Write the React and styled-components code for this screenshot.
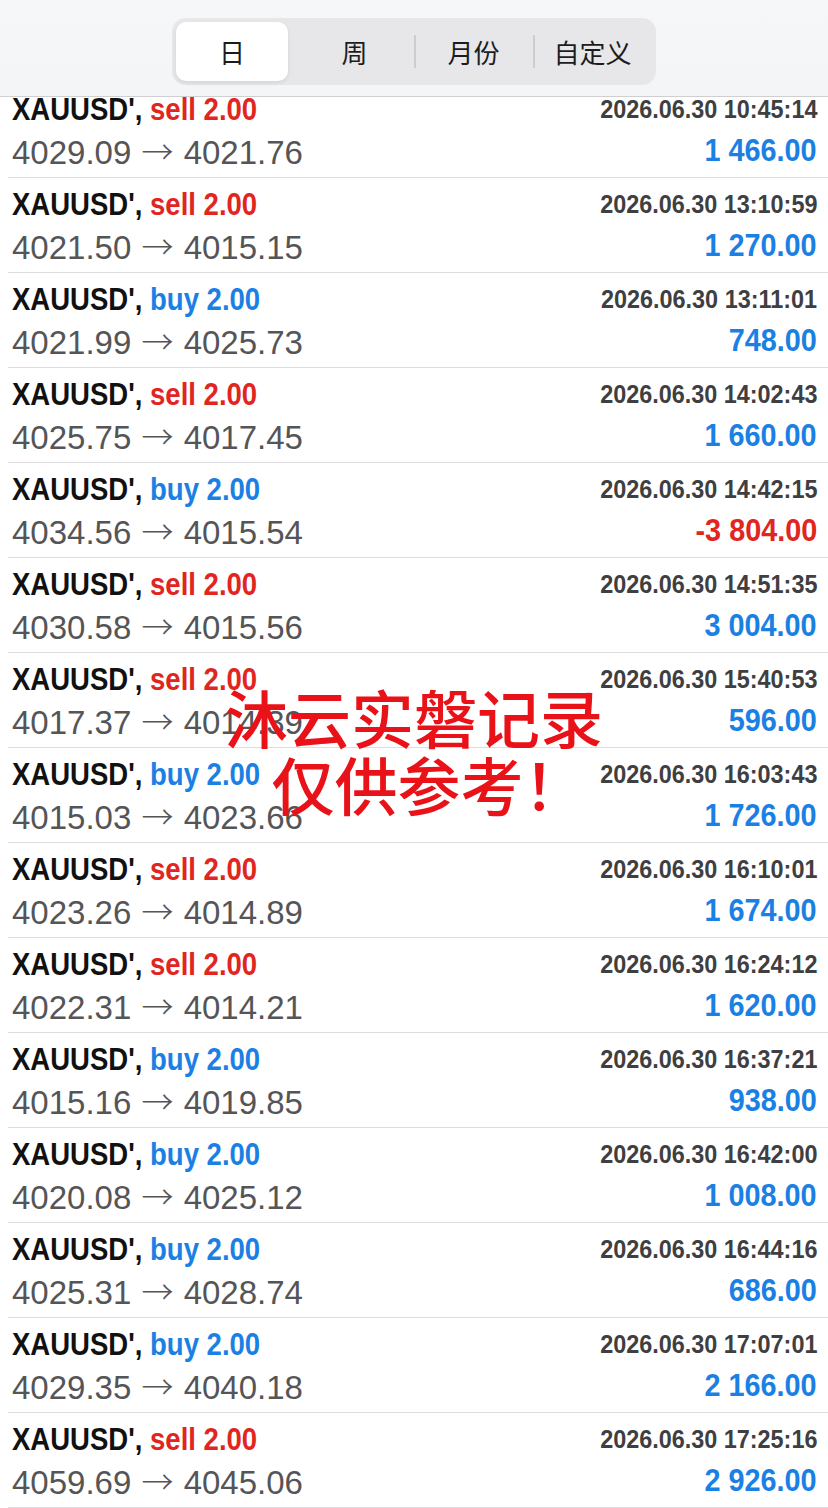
import React from 'react'
import styled, { createGlobalStyle, css } from 'styled-components'

const trades = [
  { side: 'sell', open: '4029.09', close: '4021.76', time: '10:45:14', profit: '1 466.00' },
  { side: 'sell', open: '4021.50', close: '4015.15', time: '13:10:59', profit: '1 270.00' },
  { side: 'buy', open: '4021.99', close: '4025.73', time: '13:11:01', profit: '748.00' },
  { side: 'sell', open: '4025.75', close: '4017.45', time: '14:02:43', profit: '1 660.00' },
  { side: 'buy', open: '4034.56', close: '4015.54', time: '14:42:15', profit: '-3 804.00' },
  { side: 'sell', open: '4030.58', close: '4015.56', time: '14:51:35', profit: '3 004.00' },
  { side: 'sell', open: '4017.37', close: '4014.39', time: '15:40:53', profit: '596.00' },
  { side: 'buy', open: '4015.03', close: '4023.66', time: '16:03:43', profit: '1 726.00' },
  { side: 'sell', open: '4023.26', close: '4014.89', time: '16:10:01', profit: '1 674.00' },
  { side: 'sell', open: '4022.31', close: '4014.21', time: '16:24:12', profit: '1 620.00' },
  { side: 'buy', open: '4015.16', close: '4019.85', time: '16:37:21', profit: '938.00' },
  { side: 'buy', open: '4020.08', close: '4025.12', time: '16:42:00', profit: '1 008.00' },
  { side: 'buy', open: '4025.31', close: '4028.74', time: '16:44:16', profit: '686.00' },
  { side: 'buy', open: '4029.35', close: '4040.18', time: '17:07:01', profit: '2 166.00' },
  { side: 'sell', open: '4059.69', close: '4045.06', time: '17:25:16', profit: '2 926.00' },
]

const tabs = ['日', '周', '月份', '自定义']

const RED = '#e1251f'
const BLUE = '#1a80e4'

// no condensed face installed, so squeeze Liberation Sans bold
const condensed = (scale, origin) => css`
  display: inline-block;
  font-family: "Liberation Sans", Arial, sans-serif;
  font-weight: 700;
  white-space: nowrap;
  transform: scaleX(${scale});
  transform-origin: ${origin} center;
`

const GlobalStyle = createGlobalStyle`
  body {
    margin: 0;
    background: #fff;
    font-family: "Liberation Sans", Arial, sans-serif;
  }
`

const Page = styled.div`
  position: relative;
  width: 828px;
  height: 1508px;
  overflow: hidden;
  background: #fff;
`

const Header = styled.header`
  position: relative;
  z-index: 2;
  height: 97px;
  box-sizing: border-box;
  padding-top: 18px;
  display: flex;
  justify-content: center;
  align-items: flex-start;
  background: linear-gradient(180deg, #f6f7f9 0%, #f4f5f7 100%);
  border-bottom: 1px solid #cfcfd2;
`

const Segmented = styled.div`
  display: grid;
  grid-template-columns: repeat(4, 119px);
  height: 67px;
  padding: 4px;
  box-sizing: border-box;
  background: #e7e7ea;
  border-radius: 14px;
`

const Segment = styled.div`
  position: relative;
  display: flex;
  align-items: center;
  justify-content: center;
  font-family: "Noto Sans CJK SC", sans-serif;
  font-size: 26px;
  color: #1c1c1e;
  border-radius: 10px;
  background: ${({ $active }) => ($active ? '#fff' : 'transparent')};
  box-shadow: ${({ $active }) => ($active ? '0 2px 4px rgba(0,0,0,0.08)' : 'none')};
  margin-right: ${({ $active }) => ($active ? '7px' : '0')};

  &::before {
    content: '';
    display: ${({ $divider }) => ($divider ? 'block' : 'none')};
    position: absolute;
    left: 0;
    top: 13px;
    bottom: 13px;
    width: 1.5px;
    background: #cdcdd1;
  }
`

const List = styled.div`
  margin-top: -14px;
`

const Row = styled.div`
  display: grid;
  grid-template-columns: 1fr auto;
  grid-template-rows: 40px 42px;
  align-items: center;
  height: 95px;
  box-sizing: border-box;
  padding: 6px 11px 0 4px;
  margin-left: 8px;
  border-bottom: 1.5px solid #dddddf;
`

const Cell = styled.div`
  display: flex;
  justify-content: ${({ $right }) => ($right ? 'flex-end' : 'flex-start')};
`

const Symbol = styled.span`
  ${condensed(0.86, 'left')}
  font-size: 32px;
  color: #111;
`

const Side = styled.span`
  color: ${({ $side }) => ($side === 'buy' ? BLUE : RED)};
`

const Time = styled.span`
  ${condensed(0.9, 'right')}
  font-size: 26px;
  color: #3f3f42;
`

const Price = styled.span`
  font-family: "Liberation Sans", Arial, sans-serif;
  font-size: 33px;
  color: #555558;
  white-space: nowrap;
`

const Arrow = styled.span`
  font-family: "Noto Sans CJK SC", sans-serif;
  font-weight: 300;
  font-size: 32px;
  margin: 0 1px;
`

const Profit = styled.span`
  ${condensed(0.9, 'right')}
  font-size: 32px;
  color: ${({ $loss }) => ($loss ? RED : BLUE)};
`

const Watermark = styled.div`
  position: absolute;
  z-index: 1;
  left: 0;
  right: 0;
  top: 682px;
  text-align: center;
  font-family: "Noto Sans CJK SC", sans-serif;
  font-weight: 500;
  font-size: 63px;
  line-height: 67px;
  color: #ea1219;
  pointer-events: none;
`

const WaterLine = styled.div`
  margin-left: ${({ $shift }) => $shift || 0}px;
`

export default function App() {
  return (
    <>
      <GlobalStyle />
      <Page>
        <Header>
          <Segmented>
            {tabs.map((t, i) => (
              <Segment key={t} $active={i === 0} $divider={i > 1}>
                {t}
              </Segment>
            ))}
          </Segmented>
        </Header>
        <List>
          {trades.map((t, i) => (
            <Row key={i}>
              <Cell>
                <Symbol>
                  XAUUSD', <Side $side={t.side}>{t.side} 2.00</Side>
                </Symbol>
              </Cell>
              <Cell $right>
                <Time>2026.06.30 {t.time}</Time>
              </Cell>
              <Cell>
                <Price>
                  {t.open} <Arrow>→</Arrow> {t.close}
                </Price>
              </Cell>
              <Cell $right>
                <Profit $loss={t.profit.startsWith('-')}>{t.profit}</Profit>
              </Cell>
            </Row>
          ))}
        </List>
        <Watermark>
          <WaterLine>沐云实磐记录</WaterLine>
          <WaterLine $shift={30}>仅供参考！</WaterLine>
        </Watermark>
      </Page>
    </>
  )
}
